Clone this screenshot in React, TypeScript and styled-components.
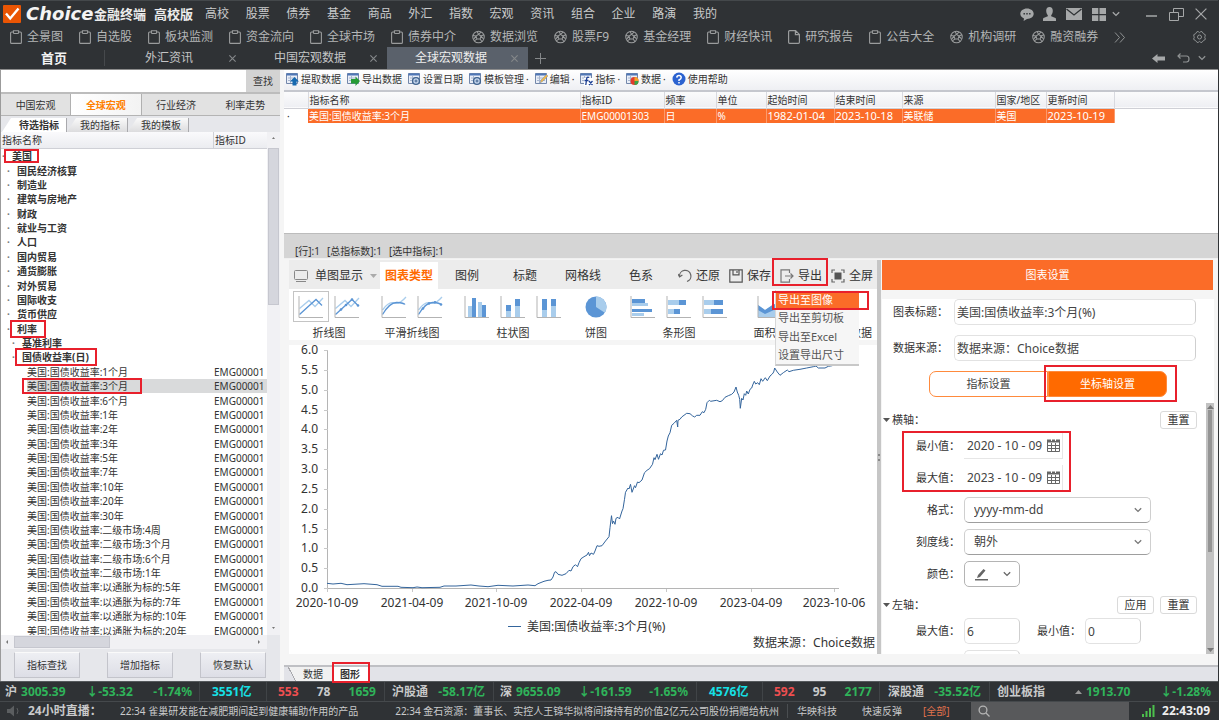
import React from "react";
import styled, { createGlobalStyle, css } from "styled-components";

const GlobalStyle = createGlobalStyle`
  *, *::before, *::after { box-sizing: border-box; }
  body {
    margin: 0;
    background: #2f3235;
    color: #333;
    font-family: "Noto Sans", "Noto Sans CJK SC", sans-serif;
    font-size: 10px;
    line-height: 14px;
  }
  button, input, select {
    font: inherit;
    color: inherit;
    margin: 0;
    padding: 0;
    border: 0;
    background: none;
    outline: none;
  }
  button { white-space: nowrap; }
  ul { list-style: none; margin: 0; padding: 0; }
  svg { display: block; flex: none; }
  a { color: inherit; text-decoration: none; }
`;

const orange = "#fb6c28";
const green = "#2fb45a";
const red = "#ee4f50";
const cyan = "#16e0e6";
const pale = "#c9cacb";

/* ---------- shell ---------- */

const Shell = styled.div`
  display: flex;
  flex-direction: column;
  min-height: 100vh;
  border-right: 1px solid #2f3235;
`;

const Highlight = styled.span<{ $inset: string }>`
  position: absolute;
  inset: ${(p) => p.$inset};
  border: 2px solid #e8202c;
  pointer-events: none;
  z-index: 5;
`;

const Anchor = styled.span`
  position: relative;
  display: inline-block;
`;

/* ---------- title area ---------- */

const Header = styled.header`
  background: #2f3235;
  color: ${pale};
  font-size: 12px;
  border-top: 1px solid #44484b;
  border-bottom: 1px solid #8c8c8c;
`;

const TitleBar = styled.div`
  display: flex;
  align-items: center;
  height: 26px;
  padding: 0 11px 0 3px;
`;

const BrandName = styled.span`
  margin-left: 5px;
  width: 68px;
  font-family: "DejaVu Sans", sans-serif;
  font-size: 18px;
  line-height: 24px;
  font-weight: 700;
  font-style: italic;
  color: #f4f4f4;
`;

const BrandSuffix = styled.span<{ $width: number }>`
  width: ${(p) => p.$width}px;
  font-size: 13px;
  font-weight: 700;
  white-space: nowrap;
  color: #ececec;
`;

const MainMenu = styled.nav`
  display: flex;
  justify-content: space-between;
  flex: 0 1 512px;
`;

const WindowTools = styled.div`
  display: flex;
  align-items: center;
  margin-left: auto;
  color: #a6a8a9;
`;

const ToolGlyph = styled.button<{ $gap: number }>`
  margin-left: ${(p) => p.$gap}px;
  color: inherit;
`;

const Shortcuts = styled.nav`
  display: flex;
  align-items: center;
  gap: 16px;
  height: 20px;
  padding: 0 12px 0 10px;
  color: #b4b6b7;
`;

const Shortcut = styled.a`
  display: flex;
  align-items: center;
  gap: 5px;
  white-space: nowrap;
`;

const PushRight = styled.div`
  display: flex;
  align-items: center;
  margin-left: auto;
  gap: 8px;
  color: #8f9293;
`;

const PageTabs = styled.div`
  display: flex;
  align-items: center;
  height: 22px;
  padding-right: 12px;
`;

const HomeTab = styled.button`
  width: 105px;
  padding-left: 4px;
  height: 16px;
  border-right: 1px solid #46494c;
  font-size: 13px;
  font-weight: 700;
  color: #f2f2f2;
`;

const PageTab = styled.div<{ $active?: boolean }>`
  display: flex;
  align-items: center;
  gap: 12px;
  width: 141px;
  height: 22px;
  padding: 0 7px 0 20px;
  text-align: center;
  color: ${(p) => (p.$active ? "#eee" : "#c4c5c6")};
  background: ${(p) => (p.$active ? "#5a616b" : "none")};
`;

const PageTabLabel = styled.button`
  flex: 1;
`;

const PageTabClose = styled.button`
  display: flex;
  justify-content: center;
  width: 14px;
  color: #85888a;
`;

/* ---------- body ---------- */

const Body = styled.main`
  display: flex;
  flex: 1;
  min-height: 0;
  background: #f5f5f5;
`;

/* ---------- left panel ---------- */

const SidePanel = styled.aside`
  display: flex;
  flex-direction: column;
  width: 280px;
  flex: none;
  background: #e6e7eb;
  border-left: 1px solid #9b9b9b;
`;

const SearchRow = styled.form`
  display: flex;
  height: 22px;
  background: #dcdcdc;
`;

const SearchInput = styled.input`
  flex: 1;
  min-width: 0;
  background: #fff;
`;

const SearchButton = styled.button`
  width: 34px;
  background: #d3d3d3;
`;

const CategoryTabs = styled.div`
  display: flex;
  height: 24px;
  border-top: 2px solid #bcbcbc;
  border-bottom: 1px solid #b4b4b4;
  background: #e2e2e2;
`;

const CategoryTab = styled.button<{ $active?: boolean }>`
  flex: 1;
  ${(p) =>
    p.$active &&
    css`
      color: #ff8000;
      font-weight: 700;
      background: linear-gradient(90deg, #fff, #f3f3f3);
      border: solid #b0b0b0;
      border-width: 0 1px;
    `}
`;

const FolderTabs = styled.div`
  display: flex;
  align-items: flex-end;
  height: 16px;
  padding-left: 1px;
`;

const FolderTab = styled.button<{ $active?: boolean }>`
  width: ${(p) => (p.$active ? 65 : 61)}px;
  height: 14px;
  padding: 0 7px 0 ${(p) => (p.$active ? 17 : 13)}px;
  text-align: left;
  font-weight: ${(p) => (p.$active ? 700 : 400)};
  background: ${(p) => (p.$active ? "#fff" : "linear-gradient(#fafafa, #dcdcde)")};
  border-right: 1px solid #a9a9ad;
  clip-path: polygon(9px 0, 100% 0, 100% 100%, 0 100%);
`;

const TreeArea = styled.div`
  display: flex;
  flex: 1;
  min-height: 0;
  background: #f1f1f4;
`;

const TreeMain = styled.div`
  display: flex;
  flex-direction: column;
  flex: 1;
  min-width: 0;
  overflow: hidden;
`;

const TreeHead = styled.div`
  display: grid;
  grid-template-columns: 1fr 54px;
  height: 17px;
  line-height: 16px;
  padding-left: 1px;
  background: linear-gradient(#fafafc, #ebecf0);
  border-bottom: 1px solid #cfd0d6;
  span + span { border-left: 1px solid #cfd0d6; padding-left: 1px; }
`;

const TreeClip = styled.div`
  display: flex;
  flex-direction: column;
  flex: 1;
  min-height: 0;
  overflow: hidden;
  background: #fff;
`;

const TreeList = styled.ul`
  display: flex;
  flex-direction: column;
  flex: 1 0 auto;
  margin-bottom: -3px;
`;

const TreeRow = styled.li<{ $level: number; $selected?: boolean }>`
  display: grid;
  grid-template-columns: 10px 1fr 53px;
  flex: 1;
  align-items: center;
  padding-left: ${(p) => 1 + p.$level * 5}px;
  white-space: nowrap;
  font-weight: ${(p) => (p.$level < 3 ? 700 : 400)};
  background: ${(p) =>
    p.$selected ? "linear-gradient(90deg, #fff 26px, #d9dadb 26px)" : "none"};
`;

const Bullet = styled.span`
  color: #777;
  text-align: left;
`;

const VTrack = styled.div`
  display: flex;
  flex-direction: column;
  align-items: center;
  justify-content: space-between;
  width: 13px;
  padding: 4px 1px 5px;
  color: #777;
`;

const VThumb = styled.div`
  flex: 0 0 157px;
  width: 11px;
  margin: 9px 0 auto;
  background: #d5d6dd;
  border: 1px solid #c6c7cf;
`;

const HTrack = styled.div`
  display: flex;
  align-items: center;
  height: 14px;
  margin-right: 13px;
  padding: 0 6px 0 4px;
  gap: 6px;
  background: #f1f1f4;
  color: #777;
`;

const HThumb = styled.div`
  width: 96px;
  height: 12px;
  margin-right: auto;
  background: #d5d6dd;
  border: 1px solid #c6c7cf;
`;

const PanelActions = styled.div`
  display: flex;
  justify-content: space-between;
  padding: 3px 14px 3px 13px;
`;

const PanelButton = styled.button`
  width: 66px;
  height: 26px;
  border: 1px solid #c3c4cb;
  border-top-color: #fafafa;
  background: linear-gradient(#eeeff3, #dddee6);
`;

/* ---------- right column ---------- */

const Workspace = styled.section`
  display: flex;
  flex-direction: column;
  flex: 1;
  min-width: 0;
  margin-left: 4px;
  background: #fff;
`;

const DataToolbar = styled.div`
  display: flex;
  align-items: center;
  gap: 6px;
  height: 22px;
  padding: 0 2px 2px;
  background: linear-gradient(#fff, #eeeff3);
  border-bottom: 2px solid #c5c7ce;
`;

const DataAction = styled.button`
  display: flex;
  align-items: center;
  gap: 2px;
`;

const GridPane = styled.div`
  flex: 1;
  overflow: hidden;
`;

const DataTable = styled.table`
  width: 100%;
  table-layout: fixed;
  border-collapse: collapse;
  th, td {
    height: 15px;
    padding: 0 0 0 1px;
    font-weight: 400;
    text-align: left;
    line-height: 14px;
    white-space: nowrap;
  }
  thead { background: linear-gradient(#fbfbfc, #eeeff3); border-bottom: 1px solid #cfd0d6; }
  thead th { height: 16px; border-right: 1px solid #d8d9df; }
  thead th:last-child { border: 0; }
  td.filled { background: ${orange}; color: #fff; border-right: 1px solid #fb9a6c; }
  td.wide { font-size: 11px; }
  td:first-child { padding-left: 3px; }
`;

const InfoStrip = styled.div`
  display: flex;
  gap: 7px;
  height: 26px;
  padding: 10px 11px 0;
  background: #d5d5d5;
  border-top: 1px solid #bcbcbc;
  border-bottom: 1px solid #f0f0f0;
  white-space: nowrap;
`;

const ChartRegion = styled.div`
  display: flex;
  padding: 1px 4px 11px 5px;
  background: #f5f5f5;
`;

const ChartColumn = styled.div`
  flex: 1;
  min-width: 0;
`;

const ChartToolbar = styled.div`
  display: flex;
  align-items: flex-end;
  height: 29px;
  background: #ececec;
  font-size: 12px;
`;

const ModeButton = styled.button`
  display: flex;
  align-items: center;
  gap: 7px;
  width: 91px;
  height: 27px;
  padding-left: 5px;
`;

const ChartTab = styled.button<{ $active?: boolean }>`
  width: 58px;
  height: 27px;
  ${(p) =>
    p.$active &&
    css`
      background: #fff;
      color: #ff6a00;
      font-weight: 700;
    `}
`;

const ChartActions = styled.div`
  display: flex;
  gap: 9px;
  margin-left: auto;
  padding-right: 4px;
`;

const ActionSlot = styled.div`
  position: relative;
`;

const ChartAction = styled.button`
  display: flex;
  align-items: center;
  gap: 4px;
  height: 27px;
`;

const ExportMenu = styled.ul`
  position: absolute;
  top: 28px;
  left: -5px;
  width: 84px;
  height: 76px;
  padding-top: 1px;
  display: flex;
  flex-direction: column;
  background: #f6f6f6;
  border-bottom: 2px solid #c8c8c8;
  border-left: 1px solid #d8d8d8;
  font-size: 11px;
  z-index: 4;
`;

const ExportItem = styled.li<{ $active?: boolean }>`
  position: relative;
  display: flex;
  flex: 1;
  align-items: center;
  padding-left: 2px;
  color: ${(p) => (p.$active ? "#fff" : "#555")};
  background: ${(p) => (p.$active ? orange : "none")};
`;

const Ribbon = styled.div`
  display: flex;
  gap: 11px;
  height: 51px;
  padding: 2px 5px 0 4px;
  background: #fff;
  font-size: 11px;
`;

const RibbonGroup = styled.div<{ $width?: number; $end?: boolean }>`
  display: flex;
  flex-direction: column;
  align-items: center;
  width: ${(p) => (p.$width ? p.$width + "px" : "auto")};
  margin-left: ${(p) => (p.$end ? "auto" : "0")};
  white-space: nowrap;
`;

const RibbonIcons = styled.div`
  display: flex;
  height: 31px;
  margin-bottom: 4px;
`;

const RibbonButton = styled.button<{ $active?: boolean }>`
  display: flex;
  align-items: center;
  justify-content: center;
  width: 36px;
  height: 31px;
  border: 1px solid ${(p) => (p.$active ? "#c4c4c4" : "transparent")};
`;

const ChartCanvas = styled.div`
  margin-top: 5px;
  background: #fff;
  svg { width: 100%; height: auto; overflow: visible; }
`;

const Splitter = styled.div`
  display: flex;
  flex-direction: column;
  justify-content: center;
  gap: 3px;
  width: 4px;
  margin-right: 1px;
  padding-left: 1px;
  background: #c6c6c6;
  i { width: 2px; height: 2px; background: #888; }
`;

const Settings = styled.section`
  display: flex;
  flex-direction: column;
  flex: 0 0 332px;
  background: #fff;
  font-size: 11px;
`;

const SettingsTitle = styled.h2`
  margin: 0;
  height: 30px;
  line-height: 30px;
  border-right: 1px solid #f5f5f5;
  font-size: 11px;
  font-weight: 400;
  text-align: center;
  color: #fff;
  background: ${orange};
`;

const SettingsTop = styled.div`
  display: flex;
  flex-direction: column;
  gap: 10px;
  padding: 0 18px 6px 11px;
  border-top: 9px solid #f5f5f5;
`;

const WideField = styled.label`
  display: flex;
  align-items: center;
  gap: 6px;
  span { width: 55px; white-space: nowrap; }
`;

const TextInput = styled.input<{ $width?: number }>`
  flex: ${(p) => (p.$width ? "none" : "1")};
  width: ${(p) => p.$width || 100}px;
  height: 26px;
  padding: 0 2px;
  border: 1px solid #e2e2e2;
  border-right-color: #cfcfcf;
  border-radius: 5px;
  background: #fff;
  font-size: 12px;
  color: #444;
`;

const Segments = styled.div`
  display: flex;
  position: relative;
  height: 26px;
  margin: 0 29px 0 36px;
`;

const Segment = styled.button<{ $active?: boolean }>`
  flex: 1;
  border: 1px solid #ff8a3c;
  border-radius: ${(p) => (p.$active ? "0 7px 7px 0" : "7px 0 0 7px")};
  background: ${(p) => (p.$active ? "#ff6a00" : "#fff")};
  color: ${(p) => (p.$active ? "#fff" : "#444")};
`;

const ScrollRow = styled.div`
  display: flex;
  flex: 1 1 0;
  min-height: 0;
  overflow: hidden;
`;

const ScrollBody = styled.div`
  flex: 1;
  padding: 4px 9px 0 0;
`;

const ScrollTrack = styled.div`
  display: flex;
  flex-direction: column;
  align-items: center;
  width: 8px;
  padding: 2px 0;
  background: #c2c2c2;
`;

const ScrollThumb = styled.div`
  width: 4px;
  height: 142px;
  margin: 1px 0 auto;
  background: #949494;
`;

const AxisHead = styled.div`
  display: flex;
  align-items: center;
  gap: 2px;
  height: 26px;
  padding-left: 1px;
`;

const SmallButton = styled.button<{ $push?: boolean }>`
  width: 37px;
  height: 18px;
  margin-left: ${(p) => (p.$push ? "auto" : "4px")};
  border: 1px solid #dadada;
  border-radius: 3px;
`;

const FieldStack = styled.div<{ $tight?: boolean }>`
  position: relative;
  display: flex;
  flex-direction: column;
  gap: 6px;
  margin-bottom: ${(p) => (p.$tight ? 0 : 5)}px;
`;

const Field = styled.div`
  display: flex;
  align-items: center;
  gap: 4px;
  height: 26px;
`;

const FieldLabel = styled.label<{ $width?: number }>`
  width: ${(p) => p.$width || 78}px;
  text-align: right;
  white-space: nowrap;
`;

const DateBox = styled.div`
  display: flex;
  align-items: center;
  width: 99px;
  height: 26px;
  padding-left: 3px;
  border: 1px solid #e6e6e6;
  border-width: 0 1px 1px 0;
  input { width: 80px; font-size: 12px; color: #444; }
`;

const SelectBox = styled.div`
  display: flex;
  align-items: center;
  width: 187px;
  height: 26px;
  padding-right: 8px;
  border: 1px solid #cfcfcf;
  border-bottom-color: #9e9e9e;
  border-radius: 5px;
  color: #777;
  select { flex: 1; appearance: none; padding-left: 9px; font-size: 12px; color: #444; }
`;

const ColorButton = styled.button`
  display: flex;
  align-items: center;
  justify-content: center;
  gap: 15px;
  width: 56px;
  height: 26px;
  border: 1px solid #b4b4b4;
  border-radius: 5px;
  color: #666;
`;

const ViewTabs = styled.div`
  display: flex;
  height: 16px;
  padding-left: 2px;
  border-top: 2px solid #bfc0c4;
  background: #e2e3e8;
`;

const ViewTab = styled.button<{ $active?: boolean }>`
  position: relative;
  width: ${(p) => (p.$active ? 36 : 46)}px;
  padding-left: ${(p) => (p.$active ? 0 : 8)}px;
  line-height: 12px;
  font-weight: ${(p) => (p.$active ? 700 : 400)};
  background: ${(p) =>
    p.$active
      ? "#fff"
      : "linear-gradient(62deg, transparent 8px, #a9a9ad 8px, #a9a9ad 9px, #f1f1f1 9px)"};
`;

/* ---------- status bars ---------- */

const Footer = styled.footer`
  background: #2f3235;
  color: ${pale};
`;

const QuoteBar = styled.div`
  display: grid;
  grid-template-columns: 200fr 67fr 118fr 109fr 203fr 66fr 117fr 110fr 228fr;
  height: 21px;
  border-top: 1px solid #55595c;
  border-bottom: 1px solid #45494c;
  font-size: 12px;
  font-weight: 700;
`;

const QuoteCell = styled.div<{ $pad: string }>`
  display: flex;
  align-items: center;
  justify-content: space-between;
  padding: ${(p) => p.$pad};
  border-right: 1px solid #404447;
  white-space: nowrap;
  &:last-child { border: 0; }
`;

const Quote = styled.span<{ $color?: string }>`
  display: flex;
  align-items: center;
  gap: 4px;
  color: ${(p) => p.$color || pale};
`;

const NewsBar = styled.div`
  display: flex;
  align-items: center;
  height: 18px;
  padding: 0 8px 0 7px;
  white-space: nowrap;
`;

const LiveLabel = styled.strong`
  width: 92px;
  margin-left: 8px;
  font-size: 12px;
`;

const Headlines = styled.div`
  display: flex;
  flex: 1;
  gap: 37px;
  min-width: 0;
  overflow: hidden;
  border-right: 1px solid #4a4e51;
`;

const Topics = styled.div`
  display: flex;
  gap: 25px;
  width: 183px;
  padding-left: 9px;
  a:last-child { margin-left: -4px; color: #e0714c; }
`;

const FooterSearch = styled.label`
  display: flex;
  align-items: center;
  width: 158px;
  height: 18px;
  margin-right: 13px;
  padding-left: 7px;
  background: #58595b;
  input { width: 120px; }
`;

const Clock = styled.time`
  margin-left: 7px;
  font-size: 12px;
  font-weight: 700;
  color: #eee;
`;

/* ---------- icons ---------- */

const Clip = () => (
  <svg width="12" height="14" viewBox="0 0 12 14" fill="none" stroke="#9a9c9d" strokeWidth="1.1">
    <path d="M3 2H1.6Q.6 2 .6 3v9.4q0 1 1 1h8.8q1 0 1-1V3q0-1-1-1H9" />
    <path d="M3.4.8h5.2v1.7q0 1-1 1H4.4q-1 0-1-1z" />
  </svg>
);
const Doc = () => (
  <svg width="12" height="14" viewBox="0 0 12 14" fill="none" stroke="#9a9c9d" strokeWidth="1.2">
    <path d="M7.6.7H1.6q-1 0-1 1v10.6q0 1 1 1h8.8q1 0 1-1V4.4zM7.4.9v3.7h3.8" />
  </svg>
);
const Orb = () => (
  <svg width="13" height="14" viewBox="0 0 14 14" fill="none" stroke="#9a9c9d" strokeWidth="1.1">
    <circle cx="7" cy="7" r="6.2" />
    <path d="M7 4.2 9.6 6 8.8 9.2H5.2L4.4 6zM7 4.2 5.6 1M9.6 6l3.2-1.4M8.8 9.2l2 3M5.2 9.2l-2.8 2M4.4 6 1 5.4M7 4.2l2.8-2.4M9.6 6l2.8 3M4.4 6 1.6 9.6" />
  </svg>
);
const Chevron = ({ size = 8 }: { size?: number }) => (
  <svg width={size} height="6" viewBox="0 0 8 6" fill="none" stroke="currentColor" strokeWidth="1.3">
    <path d="M.8 1.2 4 4.4l3.2-3.2" />
  </svg>
);
const Cross = ({ size = 7 }: { size?: number }) => (
  <svg width={size} height={size} viewBox="0 0 10 10" stroke="currentColor" strokeWidth={size > 8 ? 1 : 1.6}>
    <path d="M.5.5l9 9M9.5.5l-9 9" />
  </svg>
);
const Triangle = ({ color = "#555", up = false }: { color?: string; up?: boolean }) => (
  <svg width="7" height="4" viewBox="0 0 7 4" fill={color}>
    <path d={up ? "M0 4h7L3.500 0z" : "M0 0h7L3.500 4z"} />
  </svg>
);

const Sheet = ({ children }: { children: React.ReactNode }) => (
  <svg width="13" height="14" viewBox="0 0 13 14">
    <path d="M.5 1.500h11v10h-11z" fill="#e9eef7" stroke="#7387aa" />
    <path d="M.5 1.500h11v2h-11z" fill="#4f77b6" />
    <path d="M2 6h8M2 8.500h8M4.500 4v7" stroke="#a8b6cf" />
    {children}
  </svg>
);
const gear = (
  <g fill="none" stroke="#41648f">
    <circle cx="8" cy="9" r="3.400" fill="#c9d8ef" strokeWidth="1.400" />
    <circle cx="8" cy="9" r="1" />
  </g>
);
const dataIcons: Record<string, React.ReactNode> = {
  fetch: <path d="M8.500 5l4.500 4.500h-2.500v4h-4v-4H4z" fill="#1569b0" />,
  export: <path d="M13 9l-4.500-4.500v2.500H4v4.500h4.500V14z" fill="#249a34" />,
  date: gear,
  template: gear,
  edit: <path d="M5 11l1-3 5.500-5.500 1.500 1.500-5.500 5.500z" fill="#f0b74a" stroke="#7b90b0" strokeWidth=".5" />,
  index: (
    <g>
      <path d="M4 6h9v8H4z" fill="#fff" />
      <path d="M9 5.500q-2-.8-2.300 1L5.800 13M4.500 8.500h4M9 9l3.500 4M12.500 9L9 13" fill="none" stroke="#1c3f94" strokeWidth="1.300" />
    </g>
  ),
  data: (
    <g>
      <circle cx="8.500" cy="9" r="4" fill="#e23c2c" />
      <path d="M8.500 9v-4a4 4 0 0 1 4 4z" fill="#f2a32e" />
      <path d="M8.500 9h4a4 4 0 0 1-4 4z" fill="#38a548" />
    </g>
  ),
};
const HelpIcon = () => (
  <svg width="14" height="14" viewBox="0 0 14 14">
    <circle cx="7" cy="7" r="6.500" fill="#2b62d0" />
    <path d="M4.800 5.600Q4.900 3.600 7 3.600t2.200 1.900Q9.200 6.800 7 8v1M7 10v1.400" fill="none" stroke="#fff" strokeWidth="1.500" />
  </svg>
);

const light = "#a9cdec";
const deep = "#5b95d5";
const Axes = ({ children }: { children: React.ReactNode }) => (
  <svg width="26" height="24" viewBox="0 0 26 24" fill="none">
    {children}
    <path d="M1 1v21.500h24" stroke="#b3b3b3" />
  </svg>
);
const dots = (pts: number[][]) => pts.map(([x, y]) => <circle key={x} cx={x} cy={y} r="1.300" fill={deep} />);
const LineIcon = ({ marks = false }: { marks?: boolean }) => (
  <Axes>
    <path d="M1.500 13.500L11 5.500l6 6 8-8.500" stroke={light} strokeWidth="1.300" />
    <path d="M1.500 19.500L18 4.500l6 6" stroke={deep} strokeWidth="1.300" />
    {marks && dots([[7, 14.500], [12, 10], [18, 4.500], [24, 10.500]])}
  </Axes>
);
const SmoothIcon = ({ marks = false }: { marks?: boolean }) => (
  <Axes>
    <path d="M1.500 15Q8 6 13 8t12-6" stroke={light} strokeWidth="1.300" />
    <path d="M1.500 19.500Q9 7 16 7.500t8 2" stroke={deep} strokeWidth="1.300" />
    {marks && dots([[6, 13.500], [12, 8.500], [18, 7.300], [24, 9.500]])}
  </Axes>
);
type Bar = [number, number, number, number, string];
const BarsIcon = ({ bars }: { bars: Bar[] }) => (
  <Axes>
    {bars.map(([x, y, w, h, c], i) => (
      <rect key={i} x={x} y={y} width={w} height={h} fill={c} />
    ))}
  </Axes>
);
const columnBars: Bar[][] = [
  [[4, 11, 4, 11, light], [8, 3, 4, 19, deep], [14, 7, 4, 15, light], [18, 10, 4, 12, deep]],
  [[6, 10, 5, 6, deep], [6, 16, 5, 6, light], [15, 4, 5, 7, deep], [15, 11, 5, 11, light]],
  [[6, 4, 5, 11, deep], [6, 15, 5, 7, light], [15, 4, 5, 7, deep], [15, 11, 5, 11, light]],
];
const rowBars: Bar[][] = [
  [[2, 4, 13, 4, deep], [2, 8, 16, 3, light], [2, 14, 20, 3, deep], [2, 18, 12, 3, light]],
  [[2, 5, 12, 5, light], [13, 5, 7, 5, deep], [2, 14, 6, 5, light], [8, 14, 6, 5, deep]],
  [[2, 5, 12, 5, light], [12, 5, 9, 5, deep], [2, 14, 8, 5, light], [9, 14, 12, 5, deep]],
];
const CalendarIcon = () => (
  <svg width="13" height="13" viewBox="0 0 13 13" fill="none" stroke="#666">
    <path d="M.5 1.500h12v11H.5zM.5 6.500h12M.5 9.500h12M4.500 4v8.500M8.500 4v8.500" />
    <path d="M0 2h13" strokeWidth="3" />
    <path d="M4.500 0v2M8.500 0v2" stroke="#fff" />
  </svg>
);

/* ---------- data ---------- */

const menu = ["高校", "股票", "债券", "基金", "商品", "外汇", "指数", "宏观", "资讯", "组合", "企业", "路演", "我的"];

const shortcuts: [string, React.FC][] = [
  ["全景图", Clip], ["自选股", Clip], ["板块监测", Clip], ["资金流向", Clip], ["全球市场", Clip],
  ["债券中介", Clip], ["数据浏览", Orb], ["股票F9", Orb], ["基金经理", Orb], ["财经快讯", Clip],
  ["研究报告", Doc], ["公告大全", Clip], ["机构调研", Orb], ["融资融券", Orb],
];

type Node = { text: string; level: number; mark?: string; selected?: boolean };
const bond = "美国:国债收益率:";
const tree: Node[] = [
  { text: "美国", level: 0, mark: "0 -7px 0 -8px" },
  ...["国民经济核算", "制造业", "建筑与房地产", "财政", "就业与工资", "人口", "国内贸易", "通货膨胀", "对外贸易", "国际收支", "货币供应"].map(
    (text) => ({ text, level: 1 })
  ),
  { text: "利率", level: 1, mark: "-2px -9px -2px -7px" },
  { text: "基准利率", level: 2 },
  { text: "国债收益率(日)", level: 2, mark: "-2px -8px -2px -7px" },
  { text: bond + "1个月", level: 3 },
  { text: bond + "3个月", level: 3, mark: "-1px -14px -1px -5px", selected: true },
  ...["6个月", "1年", "2年", "3年", "5年", "7年", "10年", "20年", "30年", "二级市场:4周", "二级市场:3个月", "二级市场:6个月", "二级市场:1年", "以通胀为标的:5年", "以通胀为标的:7年", "以通胀为标的:10年", "以通胀为标的:20年"].map(
    (t) => ({ text: bond + t, level: 3 })
  ),
];

const dataActions: [string, string, boolean][] = [
  ["fetch", "提取数据", false], ["export", "导出数据", false], ["date", "设置日期", false],
  ["template", "模板管理", true], ["edit", "编辑", true], ["index", "指标", true], ["data", "数据", true],
];

const columns: [string, string, number][] = [
  ["指标名称", "美国:国债收益率:3个月", 272], ["指标ID", "EMG00001303", 84], ["频率", "日", 52],
  ["单位", "%", 50], ["起始时间", "1982-01-04", 68], ["结束时间", "2023-10-18", 68],
  ["来源", "美联储", 93], ["国家/地区", "美国", 51], ["更新时间", "2023-10-19", 68],
];

/* Yield curve: x from the axis, y from the 6.0 gridline. */
const curve =
  "0,233.3 6,234 14,233.3 20,234.7 37,233.7 50,234.7 55,236.3 71,236.3 74,237.3 86,237.7 90,237 95,237.7 113,237.3 117,236 129,236 144,235 152,236 161,236.7 171,235.3 186,236 201,235 208,235.7 211,233.7 217,231.3 221,230.3 224,230 226,227 227.5,222.3 229,221.7 231,224.3 235,225.3 239,223.7 242,220.3 244,221 246,216.7 248.5,214.7 250.5,216.7 252,212.7 254,208.7 257,206.7 260,205 261.5,202.3 262.5,205.7 264,203 266.5,204.3 268,201 270,195.7 272,196.3 275,195.7 278.5,191 282,186.7 283,177.7 284.5,165.7 285.5,173.7 286.5,171 288,174.3 289,168.3 291,167.3 292.5,169 295,161 296,158.7 297.5,149.3 298.5,142.3 301,138 302,139 303.5,134.3 305,142.3 307.5,135.7 308.5,137.7 310.5,132 312,132.7 315,130 317.5,122.7 320,120.3 322.5,118.7 325.5,114.3 327,107.7 328,109.7 330,104.3 331.5,109.3 333.5,103.7 335,105 336.5,100.3 338.5,100 340,91 341.3,86 343,82.7 344.7,75.3 347,73.3 349.7,70.3 350.7,77 351,70.3 353,69.3 354.7,67 359.7,63.3 363,63.7 365.7,66 367.7,67 369.7,65.3 373,65.3 375.3,61.7 377,62.7 378.7,59.3 380,52.7 382.3,50.3 383.7,51.3 389.7,50.3 393,51.7 395.3,50.7 398,47.3 401.3,45.7 404.7,44.3 407,42 409,37 410.3,42 411.7,45.3 412.7,49.3 413.3,58.3 414.7,48.3 416,50 417.3,43.7 418.7,45.3 419.7,41 421.3,44 423,39.3 424.7,38 425.7,35 427.3,31.3 428.7,34 430.7,32.7 432.3,34.7 434,28.7 435.7,31.3 438.3,27.7 440.3,30.7 443,26 445.3,24 446.7,22 447.7,18 450.3,22 453,25.3 456.3,22.7 460.3,20 462,21.7 466.3,20.3 473,19.3 479.7,18 486.3,16.7 489,16 491.3,18 498,18 501.3,16.3 505.3,15.7";
const yTicks = Array.from({ length: 13 }, (_, i) => i / 2);
const xTicks: [string, number][] = [
  ["2020-10-09", 0], ["2021-04-09", 85], ["2021-10-09", 169], ["2022-04-09", 254],
  ["2022-10-09", 339], ["2023-04-09", 424], ["2023-10-06", 507],
];

const YieldChart = () => (
  <svg viewBox="0 0 588 309" fontSize="12" fill="#333">
    <g transform="translate(38 5)">
      <path d="M.5 0v238.500H512" fill="none" stroke="#b5b5b5" />
      {yTicks.map((v) => {
        const y = 238 - (v * 238) / 6;
        return (
          <g key={v}>
            <path d={`M-3 ${Math.round(y) + 0.5}h4`} stroke="#c8c8c8" />
            <text x="-9" y={Math.round(y) + 4} textAnchor="end">{v.toFixed(1)}</text>
          </g>
        );
      })}
      {xTicks.map(([label, x]) => (
        <g key={label}>
          <path d={`M${x + 0.5} 239v3`} stroke="#c8c8c8" />
          <text x={x} y="257" textAnchor="middle">{label}</text>
        </g>
      ))}
      <polyline points={curve} fill="none" stroke="#34659c" strokeWidth="1" />
      <path d="M181 276.500h13" stroke="#34659c" />
      <text x="200" y="281">美国:国债收益率:3个月(%)</text>
      <text x="548" y="297" textAnchor="end">数据来源：Choice数据</text>
    </g>
  </svg>
);

const DateField = ({ id, label, value }: { id: string; label: string; value: string }) => (
  <Field>
    <FieldLabel htmlFor={id}>{label}：</FieldLabel>
    <DateBox>
      <input id={id} defaultValue={value} />
      <button aria-label="选择日期"><CalendarIcon /></button>
    </DateBox>
  </Field>
);

const SelectField = ({ id, label, value }: { id: string; label: string; value: string }) => (
  <Field>
    <FieldLabel htmlFor={id}>{label}：</FieldLabel>
    <SelectBox>
      <select id={id} defaultValue={value}><option>{value}</option></select>
      <Chevron />
    </SelectBox>
  </Field>
);

export default function App() {
  return (
    <Shell>
      <GlobalStyle />
      <Header>
        <TitleBar>
          <svg width="18" height="18" viewBox="0 0 18 18">
            <rect width="18" height="18" rx="1" fill="#ea5504" />
            <path d="M3 8.500l4.200 5L15.500 3.500" fill="none" stroke="#fff" strokeWidth="2.400" />
          </svg>
          <BrandName>Choice</BrandName>
          <BrandSuffix $width={60}>金融终端</BrandSuffix>
          <BrandSuffix $width={51}>高校版</BrandSuffix>
          <MainMenu>
            {menu.map((m) => <a href="#" key={m}>{m}</a>)}
          </MainMenu>
          <WindowTools>
            <ToolGlyph $gap={0} aria-label="消息">
              <svg width="14" height="13" viewBox="0 0 14 13" fill="#a6a8a9">
                <path d="M7 .5c3.800 0 6.700 2.300 6.700 5.300S10.800 11 7 11l-3.400 2 .4-2.600C1.700 9.500.3 7.900.3 5.800.3 2.800 3.200.5 7 .5z" />
                <path d="M3.500 5h1.400v1.400H3.500zM6.300 5h1.400v1.400H6.300zM9.100 5h1.400v1.400H9.100z" fill="#2f3235" />
              </svg>
            </ToolGlyph>
            <ToolGlyph $gap={9} aria-label="用户">
              <svg width="13" height="14" viewBox="0 0 13 14" fill="#a6a8a9">
                <path d="M6.500 0C8.700 0 9.800 1.500 9.800 3.800S8.900 7.500 8.200 8.200v1.100l4.300 1.700q.5.300.5 1.200V14H0v-1.800q0-.9.500-1.200l4.300-1.700V8.200C4.100 7.500 3.200 6 3.200 3.800S4.300 0 6.500 0z" />
              </svg>
            </ToolGlyph>
            <ToolGlyph $gap={10} aria-label="邮件">
              <svg width="16" height="12" viewBox="0 0 16 12">
                <path d="M0 0h16v12H0z" fill="#a6a8a9" />
                <path d="M.5 1L8 7l7.500-6" fill="none" stroke="#2f3235" strokeWidth="1.300" />
              </svg>
            </ToolGlyph>
            <ToolGlyph $gap={10} aria-label="应用">
              <svg width="14" height="13" viewBox="0 0 14 13" fill="#a6a8a9">
                <path d="M0 0h6.300v6H0zM7.500 0H14v6H7.500zM0 7.200h6.300V13H0zM7.500 7.200H14V13H7.500z" />
              </svg>
            </ToolGlyph>
            <ToolGlyph $gap={6} aria-label="更多"><Chevron /></ToolGlyph>
            <ToolGlyph $gap={26} aria-label="最小化">
              <svg width="11" height="12" viewBox="0 0 11 12" stroke="#a6a8a9" strokeWidth="1.500"><path d="M0 8h11" /></svg>
            </ToolGlyph>
            <ToolGlyph $gap={12} aria-label="还原窗口">
              <svg width="15" height="13" viewBox="0 0 15 13" fill="none" stroke="#a6a8a9">
                <path d="M.5 4.500h9v8h-9zM4.500 4.500v-4h10v8h-5" />
              </svg>
            </ToolGlyph>
            <ToolGlyph $gap={11} aria-label="关闭"><Cross size={12} /></ToolGlyph>
          </WindowTools>
        </TitleBar>
        <Shortcuts>
          {shortcuts.map(([label, Icon]) => (
            <Shortcut href="#" key={label}><Icon />{label}</Shortcut>
          ))}
          <svg width="12" height="11" viewBox="0 0 12 11" fill="none" stroke="#8f9293">
            <path d="M1 .5l4.500 5-4.500 5M6 .5l4.500 5-4.500 5" />
          </svg>
          <PushRight>
            <svg width="13" height="12" viewBox="0 0 13 12" fill="none" stroke="#8f9293">
              <path d="M4 .6h1.200l1.300 1 1.300-1H9l1.500 2.200 1.700.8v1.600l-.7.9.7.9v1.600l-1.700.8L9 11.400H7.800l-1.300-1-1.300 1H4L2.500 9.400.8 8.600V7l.7-.9-.7-.9V3.600l1.700-.8z" />
              <circle cx="6.500" cy="6" r="2" />
            </svg>
          </PushRight>
        </Shortcuts>
        <PageTabs>
          <HomeTab>首页</HomeTab>
          {["外汇资讯", "中国宏观数据", "全球宏观数据"].map((t, i) => (
            <PageTab key={t} $active={i === 2}>
              <PageTabLabel>{t}</PageTabLabel>
              <PageTabClose aria-label="关闭标签"><Cross /></PageTabClose>
            </PageTab>
          ))}
          <ToolGlyph $gap={7} aria-label="新建标签">
            <svg width="11" height="11" viewBox="0 0 11 11" stroke="#85888a"><path d="M0 5.500h11M5.500 0v11" /></svg>
          </ToolGlyph>
          <PushRight>
            <svg width="13" height="9" viewBox="0 0 13 9" fill="#a6a8a9"><path d="M0 4.500L5.500 0v2.500H13v4H5.500V9z" /></svg>
            <svg width="17" height="10" viewBox="-4 0 17 10" fill="none" stroke="currentColor" strokeWidth="1.200">
              <path d="M3.500.5L1 3l2.500 2.500M1 3h8.500q2.500 0 2.500 3t-2.500 3H6" />
            </svg>
            <Chevron />
          </PushRight>
        </PageTabs>
      </Header>

      <Body>
        <SidePanel>
          <SearchRow onSubmit={(e) => e.preventDefault()}>
            <SearchInput aria-label="查找指标" />
            <SearchButton>查找</SearchButton>
          </SearchRow>
          <CategoryTabs>
            {["中国宏观", "全球宏观", "行业经济", "利率走势"].map((t, i) => (
              <CategoryTab key={t} $active={i === 1}>{t}</CategoryTab>
            ))}
          </CategoryTabs>
          <FolderTabs>
            {["待选指标", "我的指标", "我的模板"].map((t, i) => (
              <FolderTab key={t} $active={i === 0}>{t}</FolderTab>
            ))}
          </FolderTabs>
          <TreeArea>
            <TreeMain>
              <TreeHead><span>指标名称</span><span>指标ID</span></TreeHead>
              <TreeClip>
                <TreeList>
                  {tree.map((n) => (
                    <TreeRow key={n.text} $level={n.level} $selected={n.selected}>
                      <Bullet>{n.level < 3 ? "·" : ""}</Bullet>
                      <span>
                        <Anchor>
                          {n.text}
                          {n.mark && <Highlight $inset={n.mark} />}
                        </Anchor>
                      </span>
                      <span>{n.level === 3 ? "EMG00001" : ""}</span>
                    </TreeRow>
                  ))}
                </TreeList>
              </TreeClip>
            </TreeMain>
            <VTrack>
              <svg width="3" height="3" viewBox="0 0 3 3" fill="#777"><path d="M0 3h3L1.500 1z" /></svg>
              <VThumb />
              <svg width="3" height="3" viewBox="0 0 3 3" fill="#777"><path d="M0 0h3L1.500 2z" /></svg>
            </VTrack>
          </TreeArea>
          <HTrack>
            <svg width="3" height="4" viewBox="0 0 3 4" fill="#777"><path d="M3 0v4L1 2z" /></svg>
            <HThumb />
            <svg width="3" height="4" viewBox="0 0 3 4" fill="#777"><path d="M0 0v4l2-2z" /></svg>
          </HTrack>
          <PanelActions>
            <PanelButton>指标查找</PanelButton>
            <PanelButton>增加指标</PanelButton>
            <PanelButton>恢复默认</PanelButton>
          </PanelActions>
        </SidePanel>

        <Workspace>
          <DataToolbar>
            {dataActions.map(([icon, label, menuArrow]) => (
              <DataAction key={label + icon}>
                <Sheet>{dataIcons[icon]}</Sheet>
                {label}{menuArrow && <span>·</span>}
              </DataAction>
            ))}
            <DataAction><HelpIcon />使用帮助</DataAction>
          </DataToolbar>
          <GridPane>
            <DataTable>
              <colgroup>
                <col style={{ width: 24 }} />
                {columns.map(([h, , w]) => <col key={h} style={{ width: w }} />)}
                <col />
              </colgroup>
              <thead>
                <tr><th />{columns.map(([h]) => <th key={h}>{h}</th>)}<th /></tr>
              </thead>
              <tbody>
                <tr>
                  <td>·</td>
                  {columns.map(([h, v]) => (
                    <td key={h} className={/^\d/.test(v) ? "filled wide" : "filled"}>{v}</td>
                  ))}
                  <td />
                </tr>
              </tbody>
            </DataTable>
          </GridPane>
          <InfoStrip>
            <span>[行]:1</span><span>[总指标数]:1</span><span>[选中指标]:1</span>
          </InfoStrip>

          <ChartRegion>
            <ChartColumn>
              <ChartToolbar>
                <ModeButton>
                  <svg width="14" height="12" viewBox="0 0 14 12" fill="none" stroke="#888">
                    <rect x=".5" y=".5" width="13" height="9" rx="1" /><path d="M2 11.500h10" />
                  </svg>
                  单图显示
                  <Triangle color="#aaa" />
                </ModeButton>
                {["图表类型", "图例", "标题", "网格线", "色系"].map((t, i) => (
                  <ChartTab key={t} $active={i === 0}>{t}</ChartTab>
                ))}
                <ChartActions>
                  <ChartAction>
                    <svg width="14" height="14" viewBox="0 0 14 14" fill="none" stroke="#666" strokeWidth="1.200">
                      <path d="M1.500 7.500a5.700 5.700 0 1 1 7.500 5M0 5l1.600 2.800L4.400 6" />
                    </svg>
                    还原
                  </ChartAction>
                  <ChartAction>
                    <svg width="14" height="14" viewBox="0 0 14 14" fill="none" stroke="#555" strokeWidth="1.200">
                      <path d="M.8.8h12.400v12.400H.8zM4 .8v5h6v-5M8 2v2" />
                    </svg>
                    保存
                  </ChartAction>
                  <ActionSlot>
                    <ChartAction>
                      <svg width="14" height="14" viewBox="0 0 14 14" fill="none" stroke="#777" strokeWidth="1.200">
                        <path d="M9.500 4V.8H1v12.400h8.500V10M5 7h8M10.500 4.500L13 7l-2.500 2.500" />
                      </svg>
                      导出
                    </ChartAction>
                    <Highlight $inset="-4px -6px 3px -8px" />
                    <ExportMenu>
                      <ExportItem $active>导出至图像<Highlight $inset="0 -10px -1px -4px" /></ExportItem>
                      <ExportItem>导出至剪切板</ExportItem>
                      <ExportItem>导出至Excel</ExportItem>
                      <ExportItem>设置导出尺寸</ExportItem>
                    </ExportMenu>
                  </ActionSlot>
                  <ChartAction>
                    <svg width="14" height="14" viewBox="0 0 14 14" fill="none" stroke="#666" strokeWidth="1.200">
                      <path d="M1 4V1h3M10 1h3v3M13 10v3h-3M4 13H1v-3" /><path d="M3.500 3.500h7v7h-7z" fill="#555" stroke="none" />
                    </svg>
                    全屏
                  </ChartAction>
                </ChartActions>
              </ChartToolbar>
              <Ribbon>
                <RibbonGroup>
                  <RibbonIcons>
                    <RibbonButton $active aria-label="折线"><LineIcon /></RibbonButton>
                    <RibbonButton aria-label="带标记折线"><LineIcon marks /></RibbonButton>
                  </RibbonIcons>
                  折线图
                </RibbonGroup>
                <RibbonGroup>
                  <RibbonIcons>
                    <RibbonButton aria-label="平滑"><SmoothIcon /></RibbonButton>
                    <RibbonButton aria-label="带标记平滑"><SmoothIcon marks /></RibbonButton>
                  </RibbonIcons>
                  平滑折线图
                </RibbonGroup>
                <RibbonGroup>
                  <RibbonIcons>
                    {columnBars.map((b, i) => <RibbonButton key={i} aria-label="柱状"><BarsIcon bars={b} /></RibbonButton>)}
                  </RibbonIcons>
                  柱状图
                </RibbonGroup>
                <RibbonGroup>
                  <RibbonIcons>
                    <RibbonButton aria-label="饼图">
                      <svg width="22" height="22" viewBox="0 0 22 22">
                        <circle cx="11" cy="11" r="10.500" fill={deep} />
                        <path d="M11 11V.5a10.500 10.500 0 0 1 8.800 16.200z" fill={light} />
                      </svg>
                    </RibbonButton>
                  </RibbonIcons>
                  饼图
                </RibbonGroup>
                <RibbonGroup>
                  <RibbonIcons>
                    {rowBars.map((b, i) => <RibbonButton key={i} aria-label="条形"><BarsIcon bars={b} /></RibbonButton>)}
                  </RibbonIcons>
                  条形图
                </RibbonGroup>
                <RibbonGroup $width={52}>
                  <RibbonIcons>
                    <RibbonButton aria-label="面积">
                      <Axes>
                        <path d="M1 10l7 5 9-6 8 4v9H1z" fill={light} />
                        <path d="M1 10l7 5 9-6 8 4v3l-8-1-9 4-7-4z" fill={deep} />
                      </Axes>
                    </RibbonButton>
                  </RibbonIcons>
                  面积图
                </RibbonGroup>
                <RibbonGroup $width={22} $end><RibbonIcons />数据</RibbonGroup>
              </Ribbon>
              <ChartCanvas><YieldChart /></ChartCanvas>
            </ChartColumn>
            <Splitter><i /><i /></Splitter>
            <Settings>
              <SettingsTitle>图表设置</SettingsTitle>
              <SettingsTop>
                <WideField><span>图表标题：</span><TextInput defaultValue="美国:国债收益率:3个月(%)" /></WideField>
                <WideField><span>数据来源：</span><TextInput defaultValue="数据来源：Choice数据" /></WideField>
                <Segments>
                  <Segment>指标设置</Segment>
                  <Segment $active>坐标轴设置</Segment>
                  <Highlight $inset="-6px -10px -5px 115px" />
                </Segments>
              </SettingsTop>
              <ScrollRow>
                <ScrollBody>
                  <AxisHead>
                    <Triangle />横轴：<SmallButton $push>重置</SmallButton>
                  </AxisHead>
                  <FieldStack>
                    <FieldStack $tight>
                      <DateField id="x-min" label="最小值" value="2020 - 10 - 09" />
                      <DateField id="x-max" label="最大值" value="2023 - 10 - 09" />
                      <Highlight $inset="-2px 126px -1px 20px" />
                    </FieldStack>
                    <SelectField id="x-format" label="格式" value="yyyy-mm-dd" />
                    <SelectField id="x-tick" label="刻度线" value="朝外" />
                    <Field>
                      <FieldLabel htmlFor="x-color">颜色：</FieldLabel>
                      <ColorButton id="x-color">
                        <svg width="14" height="13" viewBox="0 0 14 13">
                          <path d="M3 10l1-3 5.500-6 2 1.500L6 9zM1 11h13v1.500H1z" fill="#666" />
                        </svg>
                        <Chevron />
                      </ColorButton>
                    </Field>
                  </FieldStack>
                  <AxisHead>
                    <Triangle />左轴：<SmallButton $push>应用</SmallButton><SmallButton>重置</SmallButton>
                  </AxisHead>
                  <FieldStack $tight>
                    <Field>
                      <FieldLabel htmlFor="y-max">最大值：</FieldLabel>
                      <TextInput id="y-max" $width={56} defaultValue="6" />
                      <FieldLabel htmlFor="y-min" $width={57}>最小值：</FieldLabel>
                      <TextInput id="y-min" $width={56} defaultValue="0" />
                    </Field>
                    <Field>
                      <FieldLabel />
                      <TextInput $width={56} aria-label="间隔" />
                    </Field>
                  </FieldStack>
                </ScrollBody>
                <ScrollTrack>
                  <Triangle up color="#777" />
                  <ScrollThumb />
                  <Triangle color="#777" />
                </ScrollTrack>
              </ScrollRow>
            </Settings>
          </ChartRegion>

          <ViewTabs>
            <ViewTab>数据</ViewTab>
            <ViewTab $active>图形<Highlight $inset="-5px -2px -2px 0" /></ViewTab>
          </ViewTabs>
        </Workspace>
      </Body>

      <Footer>
        <QuoteBar>
          <QuoteCell $pad="0 7px 0 5px">
            <Quote $color={green}><Quote>沪</Quote>3005.39</Quote>
            <Quote $color={green}>↓-53.32</Quote>
            <Quote $color={green}>-1.74%</Quote>
          </QuoteCell>
          <QuoteCell $pad="0 12px"><Quote $color={cyan}>3551亿</Quote></QuoteCell>
          <QuoteCell $pad="0 8px 0 11px">
            <Quote $color={red}>553</Quote><Quote>78</Quote><Quote $color={green}>1659</Quote>
          </QuoteCell>
          <QuoteCell $pad="0 8px 0 7px"><Quote>沪股通</Quote><Quote $color={green}>-58.17亿</Quote></QuoteCell>
          <QuoteCell $pad="0 8px 0 6px">
            <Quote $color={green}><Quote>深</Quote>9655.09</Quote>
            <Quote $color={green}>↓-161.59</Quote>
            <Quote $color={green}>-1.65%</Quote>
          </QuoteCell>
          <QuoteCell $pad="0 12px"><Quote $color={cyan}>4576亿</Quote></QuoteCell>
          <QuoteCell $pad="0 7px 0 11px">
            <Quote $color={red}>592</Quote><Quote>95</Quote><Quote $color={green}>2177</Quote>
          </QuoteCell>
          <QuoteCell $pad="0 8px 0 8px"><Quote>深股通</Quote><Quote $color={green}>-35.52亿</Quote></QuoteCell>
          <QuoteCell $pad="0 7px 0 7px">
            <Quote>创业板指</Quote>
            <Quote $color={green}><Triangle up color="#999" />1913.70</Quote>
            <Quote $color={green}>↓-1.28%</Quote>
          </QuoteCell>
        </QuoteBar>
        <NewsBar>
          <svg width="13" height="12" viewBox="0 0 13 12" fill="#5b5e60">
            <path d="M0 4h3l4-3.500v11L3 8H0z" /><path d="M10 3q2 3 0 6" fill="none" stroke="#5b5e60" />
          </svg>
          <LiveLabel>24小时直播：</LiveLabel>
          <Headlines>
            <a href="#">22:34 雀巢研发能在减肥期间起到健康辅助作用的产品</a>
            <a href="#">22:34 金石资源：董事长、实控人王锦华拟将间接持有的价值2亿元公司股份捐赠给杭州</a>
          </Headlines>
          <Topics>
            <a href="#">华映科技</a><a href="#">快速反弹</a><a href="#">[全部]</a>
          </Topics>
          <FooterSearch>
            <svg width="12" height="12" viewBox="0 0 12 12" fill="none" stroke="#b5b5b5" strokeWidth="1.300">
              <circle cx="5" cy="5" r="3.900" /><path d="M8 8l3.500 3.500" />
            </svg>
            <input aria-label="搜索" />
          </FooterSearch>
          <PushRight>
            <svg width="13" height="12" viewBox="0 0 13 12" fill="#4cc04c">
              <path d="M0 9h2v3H0zM3.500 6h2v6h-2zM7 3h2v9H7zM10.500 0h2v12h-2z" />
            </svg>
          </PushRight>
          <Clock>22:43:09</Clock>
        </NewsBar>
      </Footer>
    </Shell>
  );
}
